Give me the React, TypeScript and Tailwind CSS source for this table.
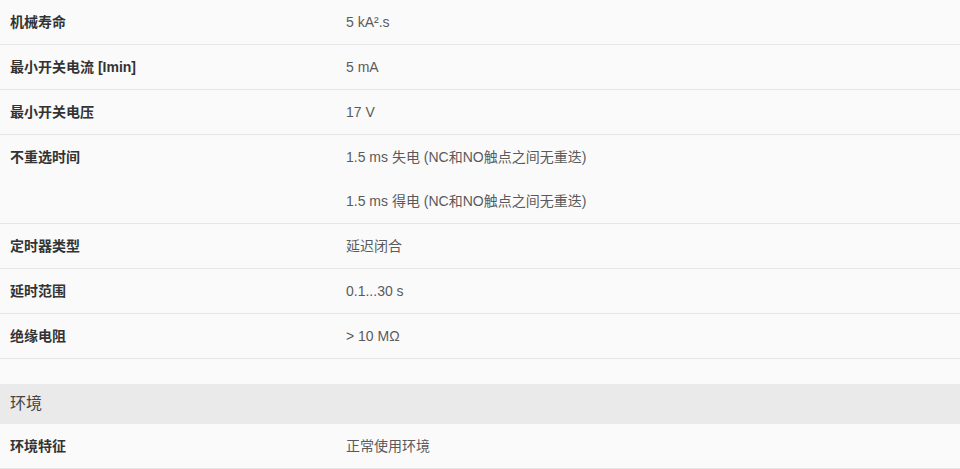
const rows: { label: string; values: string[] }[] = [
  { label: "机械寿命", values: ["5 kA².s"] },
  { label: "最小开关电流 [Imin]", values: ["5 mA"] },
  { label: "最小开关电压", values: ["17 V"] },
  {
    label: "不重选时间",
    values: ["1.5 ms 失电 (NC和NO触点之间无重迭)", "1.5 ms 得电 (NC和NO触点之间无重迭)"],
  },
  { label: "定时器类型", values: ["延迟闭合"] },
  { label: "延时范围", values: ["0.1...30 s"] },
  { label: "绝缘电阻", values: ["> 10 MΩ"] },
];

function Row({ label, values }: { label: string; values: string[] }) {
  return (
    <div className="flex border-b border-[#e6e6e6] py-[14px]">
      <div className="w-[346px] shrink-0 pl-[10px] font-bold text-[#333] leading-4">
        {label}
      </div>
      <div className="flex flex-col gap-[28px] text-[#5a5a5a] leading-4">
        {values.map((v) => (
          <div key={v}>{v}</div>
        ))}
      </div>
    </div>
  );
}

export default function App() {
  return (
    <div
      className="min-h-[469px] bg-[#fafafa] text-[14px]"
      style={{ fontFamily: '"Liberation Sans", "Noto Sans CJK SC", sans-serif' }}
    >
      {rows.map((r) => (
        <Row key={r.label} {...r} />
      ))}

      <div className="mt-[25px] flex h-10 items-center bg-[#eaeaea] pl-[10px] text-[16px] text-[#444]">
        环境
      </div>

      <Row label="环境特征" values={["正常使用环境"]} />
    </div>
  );
}
